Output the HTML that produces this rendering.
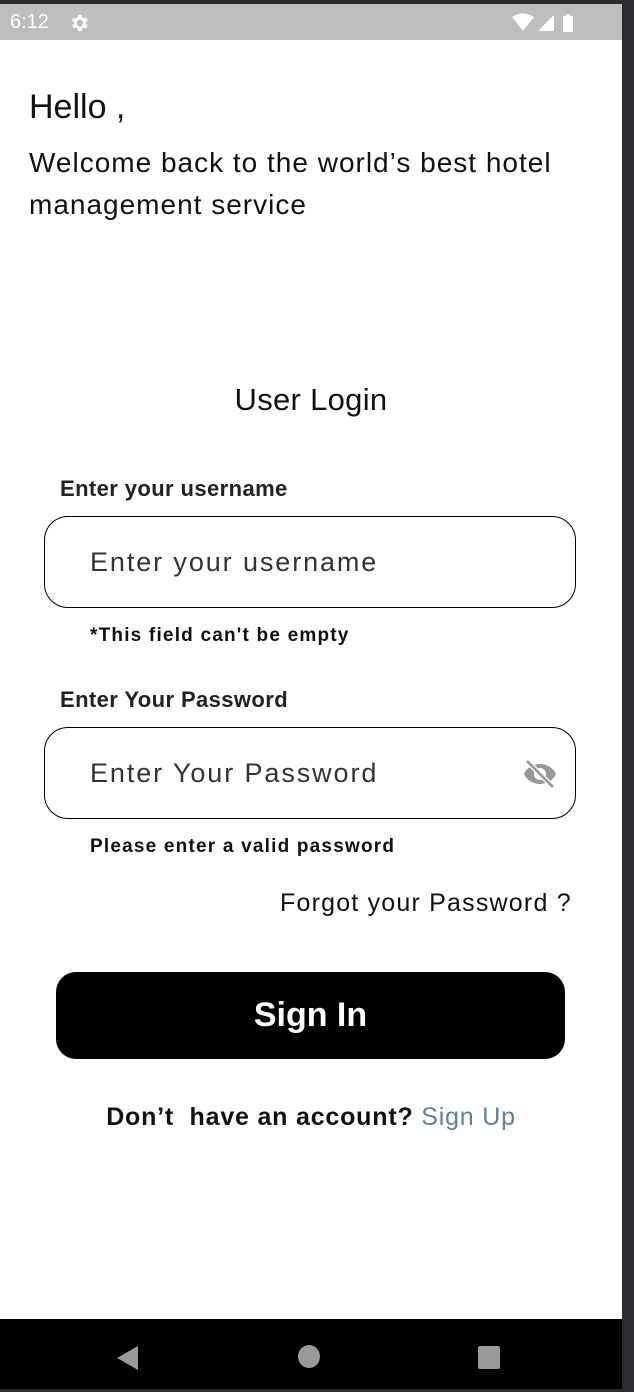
<!DOCTYPE html>
<html><head><meta charset="utf-8"><style>
*{margin:0;padding:0;box-sizing:border-box}
body{width:634px;height:1392px;background:#2b2c30;position:relative;overflow:hidden;font-family:"Liberation Sans",Roboto,sans-serif;color:#111}
.screen{position:absolute;left:0;top:4px;width:622px;height:1385px;background:#fff}
.status{position:absolute;left:0;top:0;width:622px;height:36px;background:#bebebe;color:#fff;font-size:20px}
.nav{position:absolute;left:0;top:1315px;width:622px;height:70px;background:#000}
.abs{position:absolute;white-space:nowrap}
.field{position:absolute;left:44px;width:532px;height:92px;border:1.5px solid #000;border-radius:24px}
.ph{position:absolute;left:45px;top:30px;font-size:27px;color:#333;letter-spacing:1.9px}
</style></head><body>
<div class="screen">
 <div class="status">
  <span class="abs" style="left:10px;top:7px">6:12</span>
  <svg class="abs" style="left:68px;top:8px" width="22" height="22" viewBox="0 0 24 24"><path fill="#fff" d="M19.4 13a7.5 7.5 0 000-2l2.1-1.6-2-3.5-2.5 1a7 7 0 00-1.7-1L15 3h-4l-.4 2.9a7 7 0 00-1.7 1l-2.5-1-2 3.5L6.6 11a7.5 7.5 0 000 2l-2.1 1.6 2 3.5 2.5-1a7 7 0 001.7 1L11 21h4l.4-2.9a7 7 0 001.7-1l2.5 1 2-3.5zM13 15.5a3.5 3.5 0 110-7 3.5 3.5 0 010 7z"/></svg>
  <svg class="abs" style="left:512px;top:9px" width="70" height="20" viewBox="0 0 70 20"><path fill="#fff" d="M0 4Q11-3 22 4L11 18z"/><path fill="#fff" d="M26 18L42 2V18z"/><rect x="51" y="3" width="10" height="16" rx="1" fill="#fff"/><rect x="54" y="1" width="4" height="3" fill="#fff"/></svg>
 </div>
 <div class="abs" style="left:29px;top:84px;font-size:34px">Hello ,</div>
 <div class="abs" style="left:29px;top:138px;font-size:28px;line-height:42px;letter-spacing:1px">Welcome back to the world’s best hotel<br>management service</div>
 <div class="abs" style="left:0;width:622px;text-align:center;top:378px;font-size:31px;letter-spacing:0.3px">User Login</div>
 <div class="abs" style="left:60px;top:472px;font-size:22px;font-weight:bold;color:#222;letter-spacing:0.4px">Enter your username</div>
 <div class="field" style="top:512px"><span class="ph">Enter your username</span></div>
 <div class="abs" style="left:90px;top:621px;font-size:19px;font-weight:bold;letter-spacing:1.2px">*This field can't be empty</div>
 <div class="abs" style="left:60px;top:683px;font-size:22px;font-weight:bold;color:#222;letter-spacing:0.4px">Enter Your Password</div>
 <div class="field" style="top:723px"><span class="ph">Enter Your Password</span>
  <svg class="abs" style="left:478px;top:31px" width="34" height="30" viewBox="0 0 34 30"><path fill="#999" d="M17 5C9 5 3 10 1 15c2 5 8 10 16 10s14-5 16-10C31 10 25 5 17 5zm0 16a6 6 0 110-12 6 6 0 010 12z"/><line x1="4" y1="2" x2="30" y2="28" stroke="#fff" stroke-width="5"/><line x1="4" y1="2" x2="30" y2="28" stroke="#999" stroke-width="2.6"/></svg>
 </div>
 <div class="abs" style="left:90px;top:832px;font-size:19px;font-weight:bold;letter-spacing:1.2px">Please enter a valid password</div>
 <div class="abs" style="left:280px;top:885px;font-size:25px;letter-spacing:1.2px">Forgot your Password ?</div>
 <div class="abs" style="left:56px;top:968px;width:509px;height:87px;background:#000;border-radius:20px;color:#fff;text-align:center;line-height:87px;font-size:34px;font-weight:bold">Sign In</div>
 <div class="abs" style="left:0;width:622px;text-align:center;top:1099px;font-size:25px;letter-spacing:0.8px"><b>Don’t&nbsp; have an account?</b> <span style="color:#5d8399">Sign Up</span></div>
 <div class="nav">
  <svg class="abs" style="left:116px;top:26px" width="24" height="26"><path d="M1 13L22 1V25z" fill="#999"/></svg>
  <div class="abs" style="left:298px;top:26px;width:22px;height:23px;border-radius:50%;background:#999"></div>
  <div class="abs" style="left:478px;top:27px;width:22px;height:23px;border-radius:2px;background:#999"></div>
 </div>
</div>
</body></html>
